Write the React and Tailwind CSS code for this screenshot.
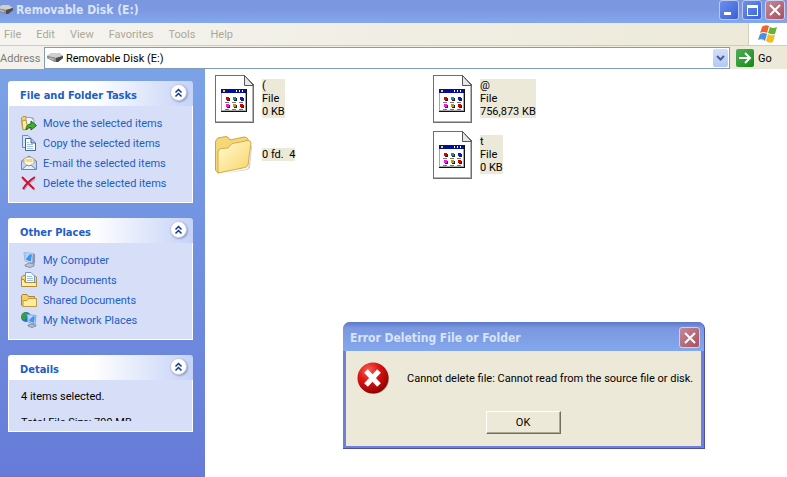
import { useState } from 'react';

const MENUS = ['File', 'Edit', 'View', 'Favorites', 'Tools', 'Help'];

const FILES = [
  { id: 1, icon: 'app', lines: ['(', 'File', '0 KB'] },
  { id: 2, icon: 'app', lines: ['@', 'File', '756,873 KB'] },
  { id: 3, icon: 'folder', lines: ['0 fd.  4'] },
  { id: 4, icon: 'app', lines: ['t', 'File', '0 KB'] },
];

function DriveIcon() {
  return (
    <svg width="16" height="16" viewBox="0 0 16 16" className="shrink-0">
      <path d="M0 6 L5 3 H12 L16 6 V8 L11 12 H8 L0 8 Z" fill="#777" />
      <path d="M0 6 L5 3 H12 L16 6 L9 8 Z" fill="#cfcfcf" />
      <path d="M0 6 L9 8 V12 H8 L0 8 Z" fill="#8f8f8f" />
      <path d="M9 8 L16 6 V8 L11 12 H9 Z" fill="#4c4c4c" />
      <path d="M2 8 L7 9.500" stroke="#ccc" />
    </svg>
  );
}

function FlagIcon() {
  return (
    <svg width="20" height="20" viewBox="0 0 20 20">
      <path d="M4 3 Q7 0 11 2 L9 9 Q6 7 2 9 Z" fill="#f0642c" />
      <path d="M12 3 Q15 5 19 3 L17 10 Q14 11 10 9 Z" fill="#65b335" />
      <path d="M2 10 Q6 8 9 10 L7 17 Q4 14 0 16 Z" fill="#4a8fe0" />
      <path d="M10 10 Q13 12 17 11 L15 18 Q11 20 8 17 Z" fill="#f5bd22" />
    </svg>
  );
}

function MoveIcon() {
  return (
    <svg width="16" height="16" viewBox="0 0 16 16">
      <path d="M.5 3 L2 1.500 H5 L6.500 3 H12 V13 H1.500 Z" fill="#f3d16b" stroke="#b5973c" />
      <path d="M5 2.500 H10 L13 5.500 V11 H5 Z" fill="#eef4fc" stroke="#8ba2c6" />
      <path d="M1 6 L5 5 L7 14 L2 15 Z" fill="#ffec9f" stroke="#b5973c" />
      <path d="M5 15 Q5 9 10 9 V6 L15.500 10.500 L10 15 V12.500 Q7 12 5 15 Z" fill="#3fb12c" stroke="#176b14" />
    </svg>
  );
}

function CopyIcon() {
  return (
    <svg width="16" height="16" viewBox="0 0 16 16">
      <path d="M1.500 .5 H7 L10.500 4 V12.500 H1.500 Z" fill="#d5e5f8" stroke="#6d8fbd" />
      <path d="M4.500 3.500 H10 L14.500 8 V15.500 H4.500 Z" fill="#fff" stroke="#44648f" />
      <path d="M10 4 V8 H14" fill="#a9c8ef" stroke="#44648f" />
      <path d="M6 7.500 H8 M6 9.500 H12 M6 11.500 H12 M6 13.500 H12" stroke="#9fc3ee" />
    </svg>
  );
}

function MailIcon() {
  return (
    <svg width="16" height="16" viewBox="0 0 16 16">
      <path d="M.5 6 L8 1 L15.500 6 V14.500 H.5 Z" fill="#a9c4ec" stroke="#6c86b5" />
      <path d="M3 8 V3.500 Q8 .5 13 3.500 V8 L8 12 Z" fill="#fffbe9" stroke="#c9ab6b" />
      <path d="M4.500 4 H11.500 V7 H4.500 Z" fill="#f7d583" />
      <path d="M1 7 L6 10.500 L1 14 Z M15 7 L10 10.500 L15 14 Z" fill="#c3d8f6" />
      <path d="M1 14.500 L6 10 Q8 12 10 10 L15 14.500 Z" fill="#e6f0fd" stroke="#6c86b5" />
    </svg>
  );
}

function DeleteIcon() {
  return (
    <svg width="16" height="16" viewBox="0 0 16 16">
      <path d="M2 4 L14 15 M14 4 Q6 9 3 15" stroke="#8d7d9e" strokeWidth="2" fill="none" opacity=".5" />
      <path d="M1 2 L13 14 M14 2 Q6 7 2 14" stroke="#d0112b" strokeWidth="2" fill="none" />
    </svg>
  );
}

function ComputerIcon() {
  return (
    <svg width="16" height="16" viewBox="0 0 16 16">
      <path d="M11 1 L14 2 V11 L11 13 Z" fill="#8595b0" />
      <path d="M3 .5 L12 1.500 L11 11 L4 9 Z" fill="#e4edf9" stroke="#9fb4d3" />
      <path d="M4 1.500 L11 2.500 L10 9.500 L5 8 Z" fill="#3d91ef" />
      <path d="M4 1.500 L9 2 L5 7 Z" fill="#a9d8ff" />
      <path d="M4 13 L8 11 L13 12 V14 L9 15.500 L4 14 Z" fill="#bcc5d2" stroke="#8793a7" />
    </svg>
  );
}

function DocumentsIcon() {
  return (
    <svg width="16" height="16" viewBox="0 0 16 16">
      <path d="M.5 5 L2 3.500 H13 L15.500 5 V14.500 H.5 Z" fill="#f7d774" stroke="#b08d36" />
      <path d="M4.500 .5 H10 L13.500 4 V11 H4.500 Z" fill="#fff" stroke="#7396c6" />
      <path d="M6 4.500 H11 M6 6.500 H12 M6 8.500 H12" stroke="#9bc2ee" />
      <path d="M.5 7.500 H3 L4 10.500 H15.500 V14.500 H.5 Z" fill="#ffefaa" stroke="#b08d36" />
    </svg>
  );
}

function SmallFolderIcon() {
  return (
    <svg width="16" height="16" viewBox="0 0 16 16">
      <path d="M.5 13 V3.500 L1.500 2.500 H6 L7.500 4.500 H13.500 V7 H15.500 V14.500 H2 Z" fill="#f3cf65" stroke="#a98529" />
      <path d="M2 14.500 V8.500 H6 L7.500 6.500 H15.500 V14.500 Z" fill="#ffeb9e" stroke="#bd9a43" />
    </svg>
  );
}

function NetworkIcon() {
  return (
    <svg width="16" height="16" viewBox="0 0 16 16">
      <circle cx="5" cy="5" r="5" fill="#2173c9" />
      <path d="M1 2 L4 0 L7 2 L5 4 L4 8 L1 7 Z" fill="#36a23c" />
      <path d="M6 2.500 L15 3.500 L14 12 L7 10 Z" fill="#dfe9f7" stroke="#88a1c7" />
      <path d="M7 3.500 L14 4.500 L13 11 L8 9 Z" fill="#4297f2" />
      <path d="M7 3.500 L12 4 L8 8 Z" fill="#b2deff" />
      <path d="M7 13 L10 12 L15 13 V14 L11 15.500 L7 14 Z" fill="#aeb9ca" stroke="#8793a7" />
    </svg>
  );
}

function AppFileIcon() {
  return (
    <svg width="40" height="48" viewBox="0 0 40 48" shapeRendering="crispEdges">
      <path d="M.5 .5 H29 L38.500 10 V47.500 H.5 Z" fill="#fff" stroke="#6e6e6e" />
      <path d="M37.500 11 V46.500 H1" fill="none" stroke="#b5b5b5" />
      <path d="M29.500 .5 V10.500 H38.500 Z" fill="#e8e8e8" stroke="#555" shapeRendering="auto" />
      <rect x="6" y="14" width="26" height="23" fill="#111" />
      <rect x="6" y="14" width="25" height="22" fill="#a8a8a8" />
      <rect x="7" y="18" width="23" height="17" fill="#fff" />
      <rect x="6" y="14" width="25" height="4" fill="#000fa0" />
      <path d="M8 15h2v2h-2z" fill="#ffd800" />
      <path d="M21 15h1v2h-1z M24 15h1v2h-1z M27 15h1v2h-1z" fill="#fff" />
      <path d="M12 23h3v3h-3z M19 23h3v3h-3z M26 23h3v3h-3z M12 30h3v3h-3z M19 30h3v3h-3z M26 30h3v3h-3z" fill="#222" />
      <path d="M11 22h3v3h-3z" fill="#e00000" />
      <path d="M18 22h3v3h-3z" fill="#009a9a" />
      <path d="M25 22h3v3h-3z" fill="#0018d8" />
      <path d="M11 29h3v3h-3z" fill="#ec20dc" />
      <path d="M18 29h3v3h-3z" fill="#b3a000" />
      <path d="M25 29h3v3h-3z" fill="#c80000" />
      <path d="M10 27h4v1h-4z M17 27h4v1h-4z M24 27h4v1h-4z M10 34h4v1h-4z M17 34h4v1h-4z M24 34h4v1h-4z" fill="#777" />
    </svg>
  );
}

function FolderIcon() {
  return (
    <svg width="40" height="48" viewBox="0 0 40 48">
      <defs>
        <linearGradient id="folderFront" x1="0" y1="0" x2="1" y2="1">
          <stop offset="0" stopColor="#fffbd0" />
          <stop offset="1" stopColor="#f8d468" />
        </linearGradient>
      </defs>
      <path d="M5 43 L32 38 Q35 36 36 14 L37 16 L35 37 L32 39 Z" fill="#777" opacity=".35" />
      <path d="M.5 11 Q1 8 3 7 L11 5.500 Q14 6 15 9 L29 6 Q32 6 33 8 V33 L3 42 L.5 39 Z" fill="#f5d778" stroke="#cfa445" />
      <path d="M3 42 L3 21 Q3 18 6 17.500 L13 17 L17 12.500 L33 9.500 Q36 9.500 36 12 L33 34 Q32 36 30 36.500 Z" fill="url(#folderFront)" stroke="#d6ab45" />
    </svg>
  );
}

function ErrorIcon() {
  return (
    <svg width="33" height="33" viewBox="0 0 33 33" className="shrink-0">
      <defs>
        <radialGradient id="errorBall" cx=".35" cy=".25" r=".8">
          <stop offset="0" stopColor="#f8604f" />
          <stop offset=".45" stopColor="#dc1414" />
          <stop offset="1" stopColor="#8c0000" />
        </radialGradient>
      </defs>
      <circle cx="17" cy="17" r="15" fill="#777" opacity=".5" />
      <circle cx="16" cy="16" r="15.500" fill="url(#errorBall)" />
      <path d="M9 9 L22 23 M22 9 L9 23" stroke="#fff" strokeWidth="5" />
    </svg>
  );
}

function CloseGlyph() {
  return (
    <svg width="12" height="12" viewBox="0 0 12 12">
      <path d="M1 1 L11 11 M11 1 L1 11" stroke="#fff" strokeWidth="2" />
    </svg>
  );
}

const TASKS = [
  { label: 'Move the selected items', Icon: MoveIcon },
  { label: 'Copy the selected items', Icon: CopyIcon },
  { label: 'E-mail the selected items', Icon: MailIcon },
  { label: 'Delete the selected items', Icon: DeleteIcon },
];

const PLACES = [
  { label: 'My Computer', Icon: ComputerIcon },
  { label: 'My Documents', Icon: DocumentsIcon },
  { label: 'Shared Documents', Icon: SmallFolderIcon },
  { label: 'My Network Places', Icon: NetworkIcon },
];

function Panel({ title, children }) {
  return (
    <section>
      <div className="flex h-[25px] items-center justify-between rounded-t-[3px] bg-linear-to-r from-white from-45% to-[#c6d3f7] pl-3 pr-[6px]">
        <h2 className="pt-[3px] font-['DejaVu_Sans_Condensed','DejaVu_Sans',sans-serif] text-[11px] font-bold text-[#215dc6]">{title}</h2>
        <button
          aria-label={`Collapse ${title}`}
          className="mb-[2px] flex size-[17px] items-center justify-center rounded-full border border-[#c3cbe2] bg-white shadow-[1px_1px_2px_#8d9cc8]"
        >
          <svg width="9" height="10" viewBox="0 0 9 10" fill="none" stroke="#14388f" strokeWidth="1.500">
            <path d="M1.500 4.500 L4.500 1.500 L7.500 4.500 M1.500 8.500 L4.500 5.500 L7.500 8.500" />
          </svg>
        </button>
      </div>
      <div className="border border-t-0 border-white bg-[#d6dff7]">{children}</div>
    </section>
  );
}

function LinkList({ items }) {
  return (
    <ul className="pt-[7px] pb-[9px] pl-3">
      {items.map(({ label, Icon }) => (
        <li key={label} className="h-5">
          <a href="#" className="flex h-5 items-center gap-[6px] text-[#215dc6]">
            <Icon />
            {label}
          </a>
        </li>
      ))}
    </ul>
  );
}

function ErrorDialog({ onClose }) {
  return (
    <div
      role="dialog"
      aria-labelledby="dialog-title"
      className="absolute top-[322px] left-[343px] rounded-t-[7px] border-r border-b border-[#4a50b0] bg-[#6f7fda] px-[3px] pb-[2px]"
    >
      <div className="-mx-[3px] flex h-[29px] items-center justify-between rounded-t-[7px] bg-linear-to-b from-[#5c78c8] via-[#7b97e0] via-20% to-[#83a8ee] pt-[2px] pr-1 pl-[7px]">
        <h1 id="dialog-title" className="pt-[2px] font-['DejaVu_Sans_Condensed','DejaVu_Sans',sans-serif] text-[12px] font-bold text-[#d8e4f8]">
          Error Deleting File or Folder
        </h1>
        <button
          aria-label="Close"
          onClick={onClose}
          className="flex size-[21px] items-center justify-center rounded-[3px] border border-[#c9d0f2] bg-linear-to-br from-[#c08a9c] to-[#a84f5c]"
        >
          <CloseGlyph />
        </button>
      </div>
      <div className="bg-[#ece9d8] pt-[11px] pr-2 pb-3 pl-[11px]">
        <div className="flex items-center gap-[17px]">
          <ErrorIcon />
          <p className="whitespace-nowrap">Cannot delete file: Cannot read from the source file or disk.</p>
        </div>
        <div className="flex justify-center pt-4 pr-1">
          <button
            onClick={onClose}
            className="h-[23px] w-[75px] border border-t-white border-r-[#716f64] border-b-[#716f64] border-l-white bg-[#ece9d8] shadow-[inset_-1px_-1px_0_#aca899]"
          >
            OK
          </button>
        </div>
      </div>
    </div>
  );
}

export default function App() {
  const [address, setAddress] = useState('Removable Disk (E:)');
  const [dialogOpen, setDialogOpen] = useState(true);

  return (
    <div className="relative flex min-h-screen flex-col bg-white font-[Roboto,'Liberation_Sans',sans-serif] text-[11px] leading-[13px] text-black">
      {/* Title bar */}
      <header className="flex h-[23px] items-start justify-between bg-linear-to-b from-[#7b97e0] from-40% to-[#83a8ee] pr-[2px]">
        <div className="flex h-5 items-center">
          <div className="-ml-[3px]">
            <DriveIcon />
          </div>
          <h1 className="pt-px pl-[3px] font-['DejaVu_Sans_Condensed','DejaVu_Sans',sans-serif] text-[12px] font-bold text-[#d8e4f8]">
            Removable Disk (E:)
          </h1>
        </div>
        <div className="flex gap-[3px]">
          <button aria-label="Minimize" className="flex h-5 w-5 items-end rounded-[3px] border border-[#b9c9f2] bg-linear-to-br from-[#6d8fe8] to-[#3a5fdc] pb-1 pl-1">
            <span className="h-[3px] w-[7px] bg-white" />
          </button>
          <button aria-label="Maximize" className="flex h-5 w-5 items-center justify-center rounded-[3px] border border-[#b9c9f2] bg-linear-to-br from-[#6d8fe8] to-[#3a5fdc]">
            <span className="h-[11px] w-[11px] border border-t-[3px] border-white" />
          </button>
          <button aria-label="Close window" className="flex h-5 w-5 items-center justify-center rounded-[3px] border border-[#c9d0f2] bg-linear-to-br from-[#c08a9c] to-[#a84f5c]">
            <CloseGlyph />
          </button>
        </div>
      </header>

      {/* Menu bar */}
      <div className="flex h-[23px] justify-between border-b border-[#d0cdbd] bg-linear-to-r from-[#f5f4f0] to-[#ece9d8]">
        <nav className="flex items-center gap-[15px] pl-1 text-[#aca899]">
          {MENUS.map((menu) => (
            <button key={menu}>{menu}</button>
          ))}
        </nav>
        <div className="flex w-[39px] items-center justify-center border-l border-[#d0cdbd] bg-white">
          <FlagIcon />
        </div>
      </div>

      {/* Address bar */}
      <div className="flex h-[23px] items-stretch bg-linear-to-r from-[#f3f2ec] to-[#ece9d8] pt-px">
        <label htmlFor="address" className="flex w-11 items-center text-[#7f7c73]">
          Address
        </label>
        <div className="flex grow items-center border border-[#7f9db9] bg-white pr-px pl-[2px]">
          <DriveIcon />
          <input
            id="address"
            value={address}
            onChange={(e) => setAddress(e.target.value)}
            className="min-w-0 grow bg-transparent pl-[3px] outline-none"
          />
          <button aria-label="Show addresses" className="flex h-[18px] w-[15px] items-center justify-center rounded-[2px] bg-linear-to-b from-[#d2defc] to-[#b3c8f8]">
            <svg width="9" height="6" viewBox="0 0 9 6" fill="none" stroke="#4d6185" strokeWidth="2">
              <path d="M1 1 L4.500 4.500 L8 1" />
            </svg>
          </button>
        </div>
        <button className="flex w-[57px] items-center gap-1 pl-[6px]">
          <span className="flex size-[18px] items-center justify-center rounded-[2px] bg-linear-to-br from-[#4fae57] to-[#0a8a10]">
            <svg width="14" height="14" viewBox="0 0 14 14" fill="none" stroke="#fff" strokeWidth="2">
              <path d="M1 7 H12 M7 2 L12 7 L7 12" />
            </svg>
          </span>
          Go
        </button>
      </div>

      <div className="flex grow">
        <aside className="flex w-[205px] shrink-0 flex-col gap-[15px] bg-linear-to-b from-[#7ba2e7] to-[#667bd8] pt-3 pr-3 pl-2">
          <Panel title="File and Folder Tasks">
            <LinkList items={TASKS} />
          </Panel>
          <Panel title="Other Places">
            <LinkList items={PLACES} />
          </Panel>
          <Panel title="Details">
            <div className="px-3 pt-[10px] pb-[10px]">
              <div className="h-[31px] overflow-hidden">
                <p>4 items selected.</p>
                <p className="pt-[13px]">Total File Size: 799 MB</p>
              </div>
            </div>
          </Panel>
        </aside>

        <main className="grid grow grid-cols-[repeat(auto-fill,218px)] content-start gap-y-2 pt-[6px] pl-[10px]">
          {FILES.map((file) => (
            <div key={file.id} className="flex h-12 items-center gap-[7px]">
              {file.icon === 'folder' ? <FolderIcon /> : <AppFileIcon />}
              <div className="mb-[2px] bg-[#ece9d8] whitespace-pre">
                {file.lines.map((line) => (
                  <p key={line}>{line}</p>
                ))}
              </div>
            </div>
          ))}
        </main>
      </div>

      {dialogOpen && <ErrorDialog onClose={() => setDialogOpen(false)} />}
    </div>
  );
}
